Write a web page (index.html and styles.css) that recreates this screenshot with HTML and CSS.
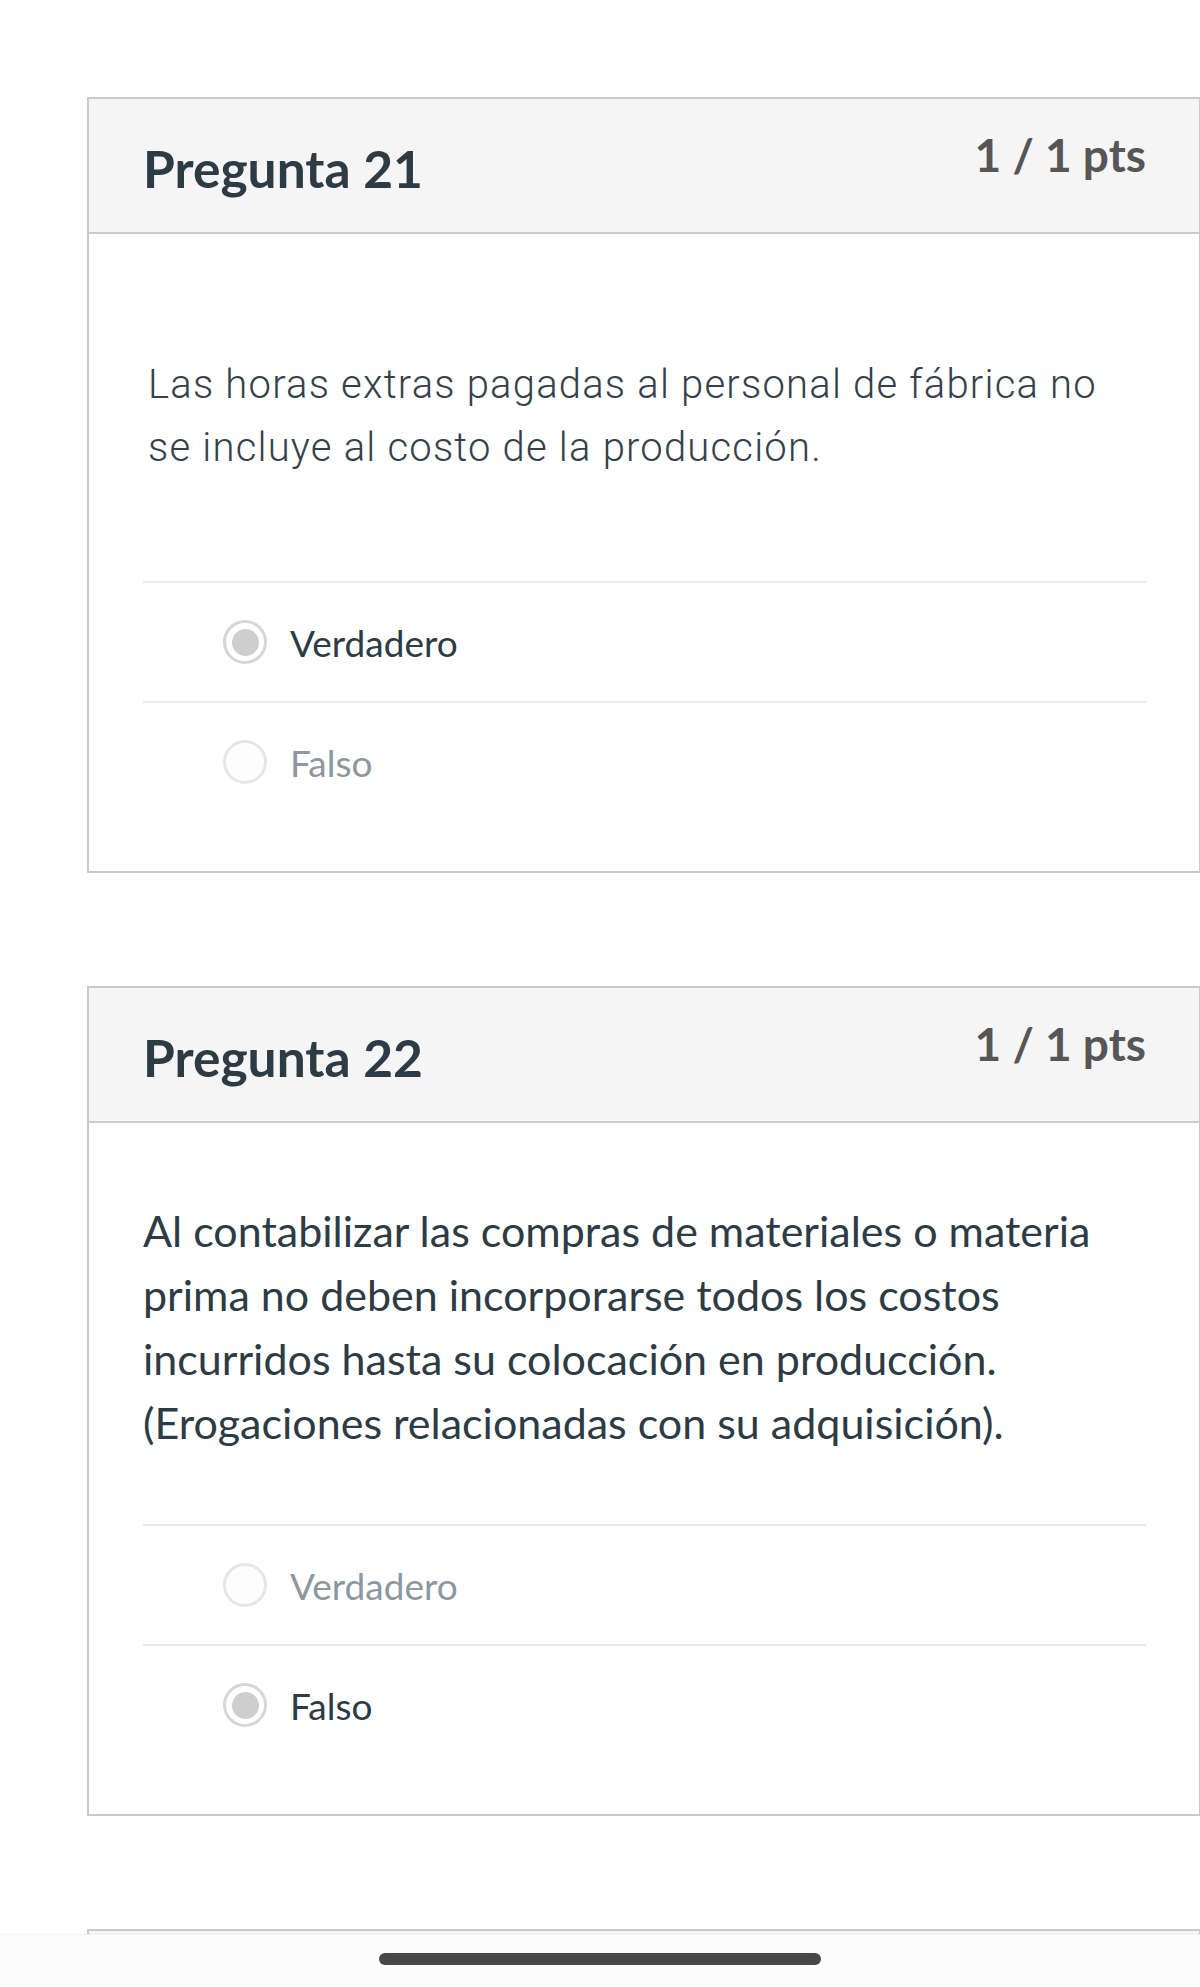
FILE: index.html
```html
<!DOCTYPE html>
<html lang="es">
<head>
  <meta charset="UTF-8">
  <meta name="viewport" content="width=device-width, initial-scale=1.0">
  <title>Resultados del examen</title>
  <link rel="stylesheet" href="styles.css">
</head>
<body>

  <div class="quiz">

    <div class="question">
      <div class="question-header">
        <h2 class="question-title">Pregunta 21</h2>
        <div class="question-points">1 / 1 pts</div>
      </div>
      <div class="question-body">
        <p class="question-text light">Las horas extras pagadas al personal de fábrica no se incluye al costo de la producción.</p>
        <div class="answers">
          <div class="answer selected">
            <span class="radio checked"></span>
            <span class="answer-label">Verdadero</span>
          </div>
          <div class="answer">
            <span class="radio"></span>
            <span class="answer-label">Falso</span>
          </div>
        </div>
      </div>
    </div>

    <div class="question">
      <div class="question-header">
        <h2 class="question-title">Pregunta 22</h2>
        <div class="question-points">1 / 1 pts</div>
      </div>
      <div class="question-body">
        <p class="question-text">Al contabilizar las compras de materiales o materia prima no deben incorporarse todos los costos incurridos hasta su colocación en producción. (Erogaciones relacionadas con su adquisición).</p>
        <div class="answers">
          <div class="answer">
            <span class="radio"></span>
            <span class="answer-label">Verdadero</span>
          </div>
          <div class="answer selected">
            <span class="radio checked"></span>
            <span class="answer-label">Falso</span>
          </div>
        </div>
      </div>
    </div>

    <!-- la siguiente pregunta queda tapada por la barra inferior -->
    <div class="question next">
      <div class="question-header"></div>
    </div>

  </div>

  <div class="home-bar">
    <div class="home-indicator"></div>
  </div>

</body>
</html>
```

FILE: styles.css
```css
body {
  margin: 0;
  padding: 0;
  background-color: #ffffff;
  font-family: Lato, "Liberation Sans", sans-serif;
  color: #2d3b45;
}
.quiz {
  padding: 97px 0 0 87px;
}
.question {
  border: 2px solid #c9c9c9;
  border-right-width: 1px;
  margin-bottom: 113px;
  background-color: #ffffff;
}
.question.next {
  border-bottom: none;
  margin-bottom: 0;
}
.question.next .question-header {
  height: 55px;
  border-bottom: none;
}
.question-header {
  display: flex;
  justify-content: space-between;
  align-items: flex-start;
  height: 133px;
  padding: 0 53px 0 54px;
  background-color: #f5f5f5;
  border-bottom: 2px solid #c9cdd0;
}
.question-title {
  margin: 44px 0 0 0;
  font-size: 51.5px;
  font-weight: 700;
  line-height: 1;
  color: #2d3b45;
}
.question-points {
  margin-top: 33px;
  font-size: 46px;
  font-weight: 700;
  line-height: 1;
  color: #565656;
}
.question-body {
  padding: 76px 53px 50px 54px;
}
.question-text {
  margin: 0 0 69px 0;
  font-size: 43px;
  line-height: 64px;
  color: #2d3b45;
}
.question-text.light {
  margin: 43px 0 102px 5px;
  font-family: Roboto, "Liberation Sans", sans-serif;
  font-weight: 300;
  font-size: 40px;
  line-height: 63px;
  letter-spacing: 1.2px;
  color: #34414b;
}
.answer {
  display: flex;
  align-items: center;
  gap: 23px;
  height: 118px;
  padding-left: 80px;
  border-top: 2px solid #e8e8e8;
}
.radio {
  width: 44px;
  height: 44px;
  box-sizing: border-box;
  border-radius: 50%;
  border: 3px solid #e6e6e6;
  background-color: #fdfdfd;
  display: flex;
  align-items: center;
  justify-content: center;
}
.radio.checked {
  border-color: #d6d6d6;
  background-color: #ffffff;
}
.radio.checked::after {
  content: "";
  width: 27px;
  height: 27px;
  border-radius: 50%;
  background-color: #cecece;
}
.answer-label {
  font-size: 37px;
  color: #8c979f;
}
.answer.selected .answer-label {
  color: #2d3b45;
}
.home-bar {
  position: fixed;
  left: 0;
  right: 0;
  bottom: 0;
  height: 52px;
  background-color: #fcfcfc;
  border-top: 1px solid #efefef;
}
.home-indicator {
  width: 442px;
  height: 12px;
  margin: 18px auto 0 auto;
  border-radius: 6px;
  background-color: #474747;
}
```
